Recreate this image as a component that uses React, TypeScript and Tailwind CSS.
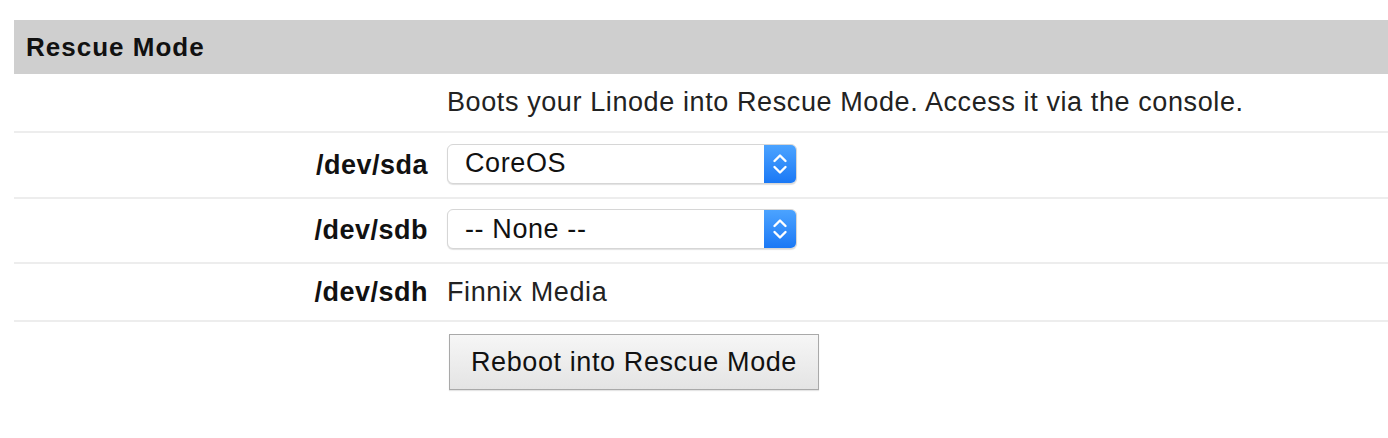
import React from 'react';

const SelectBox: React.FC<{ value: string }> = ({ value }) => (
  <div className="flex h-[40px] w-[350px] items-stretch rounded-[6px] border border-[#d6d6d6] bg-white shadow-[0_1px_1px_rgba(0,0,0,0.12)]">
    <span className="flex flex-1 items-center pl-[17px] text-[27px] tracking-[0.6px] text-[#111]">{value}</span>
    <span className="flex w-[32px] items-center justify-center rounded-r-[5px] bg-gradient-to-b from-[#4ba3ff] to-[#1a78f5]">
      <svg width="16" height="26" viewBox="0 0 16 26" fill="none" stroke="white" strokeWidth="2.4" strokeLinecap="round" strokeLinejoin="round">
        <path d="M2.5 10 L8 4.5 L13.5 10" />
        <path d="M2.5 16 L8 21.5 L13.5 16" />
      </svg>
    </span>
  </div>
);

const Row: React.FC<{ label?: string; h: string; children: React.ReactNode }> = ({ label, h, children }) => (
  <div className={`grid grid-cols-[414px_1fr] items-center gap-x-[19px] border-b-2 border-[#ededed] ${h}`}>
    <div className="text-right text-[27px] font-bold tracking-[0.5px] text-[#111]">{label}</div>
    <div className="flex items-center">{children}</div>
  </div>
);

export default function App() {
  return (
    <div className="min-h-[438px] bg-white pl-[14px] pt-[20px] font-['Liberation_Sans',Arial,sans-serif]">
      <div className="flex h-[54px] items-center bg-[#cfcfcf] pl-[12px] text-[26px] font-bold tracking-[1px] text-[#111]">
        Rescue Mode
      </div>
      <Row h="h-[59px]">
        <span className="text-[27px] tracking-[0.6px] text-[#222]">Boots your Linode into Rescue Mode. Access it via the console.</span>
      </Row>
      <Row h="h-[66px]" label="/dev/sda">
        <div className="-mt-[3px]">
          <SelectBox value="CoreOS" />
        </div>
      </Row>
      <Row h="h-[65px]" label="/dev/sdb">
        <div className="-mt-[3px]">
          <SelectBox value="-- None --" />
        </div>
      </Row>
      <Row h="h-[58px]" label="/dev/sdh">
        <span className="text-[27px] tracking-[0.6px] text-[#222]">Finnix Media</span>
      </Row>
      <div className="grid grid-cols-[414px_1fr] gap-x-[21px] pt-[12px]">
        <div />
        <div>
          <button className="h-[56px] w-[370px] border border-[#a9a9a9] bg-gradient-to-b from-[#f6f6f6] to-[#e4e4e4] text-[27px] tracking-[0.6px] text-[#111] shadow-[0_1px_1px_rgba(0,0,0,0.1)]">
            Reboot into Rescue Mode
          </button>
        </div>
      </div>
    </div>
  );
}
